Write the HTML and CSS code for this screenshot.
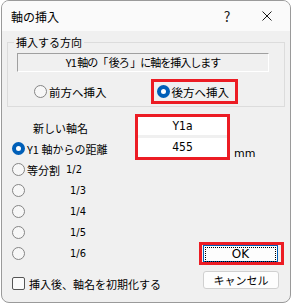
FILE: index.html
```html
<!DOCTYPE html>
<html>
<head>
    <title>軸の挿入</title>
    <link rel="stylesheet" href="styles.css">
</head>
<body>
    <div id="dialog">
        <div class="titlebar">
            <span class="title">軸の挿入</span>
            <span class="help">?</span>
            <span class="close">
                <svg width="10" height="10" viewBox="0 0 10 10"><path d="M0.5 0.5L9.5 9.5M9.5 0.5L0.5 9.5" stroke="#1a1a1a" stroke-width="1"/></svg>
            </span>
        </div>
        <div class="client">
            <div class="group">
                <span class="legend">挿入する方向</span>
                <div class="static">Y1 軸の「 後ろ 」に軸を挿入します</div>
                <div class="dirrow">
                    <label class="radio dir1"><span class="dot"></span>前方へ挿入</label>
                    <label class="radio dir2 mark"><span class="dot on"></span>後方へ挿入</label>
                </div>
            </div>
            <div class="lower">
                <div class="leftcol">
                    <div class="row name">新しい軸名</div>
                    <div class="row"><span class="dot on"></span>Y1 軸からの距離</div>
                    <div class="row"><span class="dot"></span>等分割 <span class="frac f2">1/2</span></div>
                    <div class="row"><span class="dot"></span><span class="frac">1/3</span></div>
                    <div class="row"><span class="dot"></span><span class="frac">1/4</span></div>
                    <div class="row"><span class="dot"></span><span class="frac">1/5</span></div>
                    <div class="row"><span class="dot"></span><span class="frac">1/6</span></div>
                    <div class="row check"><span class="box"></span>挿入後、軸名を初期化する</div>
                </div>
                <div class="rightcol">
                    <div class="editrow">
                        <div class="editmark">
                            <div class="edit e1">Y1a</div>
                            <div class="edit e2">455</div>
                        </div>
                        <span class="unit">mm</span>
                    </div>
                    <div class="okmark">
                        <div class="btn ok"><span class="focus">OK</span></div>
                    </div>
                    <div class="btn cancel">キャンセル</div>
                </div>
            </div>
        </div>
    </div>
</body>
</html>
```

FILE: styles.css
```css
body {
    margin: 0;
    background: #ffffff;
    font: 11px "Noto Sans CJK JP", "Liberation Sans", sans-serif;
    color: #000;
}
#dialog {
    margin-left: 1px;
    width: 288px;
    height: 301px;
    border: 1px solid #9a9a9a;
    border-radius: 8px;
    overflow: hidden;
    background: #f0f0f0;
}
.titlebar {
    height: 30px;
    background: #fafafa;
    display: flex;
    align-items: center;
}
.title {
    margin-left: 9px;
    flex: 1;
    font-size: 12px;
}
.help {
    width: 20px;
    text-align: center;
    font-size: 14px;
    color: #222;
    margin-right: 25px;
}
.close {
    width: 10px;
    height: 10px;
    margin-right: 18px;
    display: flex;
}
.group {
    margin: 11px 0 0 5px;
    width: 276px;
    height: 63px;
    border: 1px solid #dcdcdc;
}
.legend {
    display: block;
    width: max-content;
    height: 14px;
    margin: -8px 0 0 6px;
    padding: 0 2px;
    background: #f0f0f0;
    line-height: 14px;
}
.static {
    margin: 4px 0 0 9px;
    width: 250px;
    height: 17px;
    line-height: 17px;
    text-align: center;
    letter-spacing: -1px;
    border: 1px solid;
    border-color: #a0a0a0 #ffffff #ffffff #a0a0a0;
}
.dirrow {
    display: flex;
    margin-top: 7px;
}
.radio {
    display: flex;
    align-items: center;
    height: 19px;
    font-size: 11.5px;
    white-space: nowrap;
}
.dir1 {
    margin: 3px 0 0 26px;
}
.dir2 {
    margin-left: 44px;
}
.mark {
    border: 3px solid #ec1c24;
    padding: 0 0 0 3px;
    width: 78px;
}
.dot {
    display: inline-block;
    box-sizing: border-box;
    width: 13px;
    height: 13px;
    border-radius: 50%;
    border: 1px solid #858585;
    background: #f7f7f7;
    margin-right: 2px;
    flex: none;
}
.dot.on {
    border: 4px solid #005fb8;
    background: #ffffff;
}
.lower {
    display: flex;
}
.leftcol {
    width: 133px;
    padding-top: 10px;
}
.row {
    height: 21px;
    display: flex;
    align-items: center;
    padding-left: 10px;
    white-space: nowrap;
}
.row.name {
    padding-left: 31px;
}
.frac {
    margin-left: 43px;
    font-size: 11px;
    font-family: "DejaVu Sans Condensed", "Liberation Sans Narrow", sans-serif;
}
.frac.f2 {
    margin-left: 6px;
}
.row.check {
    margin-top: 9px;
}
.box {
    display: inline-block;
    flex: none;
    width: 11px;
    height: 11px;
    border: 1px solid #555;
    border-radius: 2px;
    background: #fbfbfb;
    margin-right: 4px;
}
.rightcol {
    padding-top: 7px;
}
.editrow {
    display: flex;
    align-items: flex-end;
}
.editmark {
    width: 89px;
    border: 3px solid #ec1c24;
    background: #f0f0f0;
}
.edit {
    background: #fff;
    text-align: center;
    font-family: "DejaVu Sans Condensed", "Liberation Sans Narrow", sans-serif;
    font-size: 12px;
}
.e1 {
    height: 18px;
    line-height: 18px;
    margin-bottom: 3px;
}
.e2 {
    height: 19px;
    line-height: 19px;
}
.unit {
    margin: 0 0 0 4px;
    font-family: "DejaVu Sans", sans-serif;
    font-size: 11px;
}
.okmark {
    margin: 82px 0 0 64px;
    width: 77px;
    border: 3px solid #ec1c24;
    padding: 0 1px;
}
.btn {
    box-sizing: border-box;
    width: 75px;
    height: 18px;
    background: #fdfdfd;
    text-align: center;
    font-size: 11px;
    line-height: 16px;
}
.ok {
    border: 1px solid #005fb8;
    padding: 1px;
    height: 17px;
}
.focus {
    display: block;
    height: 13px;
    line-height: 13px;
    border: 1px dotted #000;
    font-family: "DejaVu Sans", sans-serif;
    font-size: 12px;
}
.cancel {
    margin: 6px 0 0 68px;
    width: 76px;
    border: 1px solid #d0d0d0;
    border-radius: 3px;
}
```
